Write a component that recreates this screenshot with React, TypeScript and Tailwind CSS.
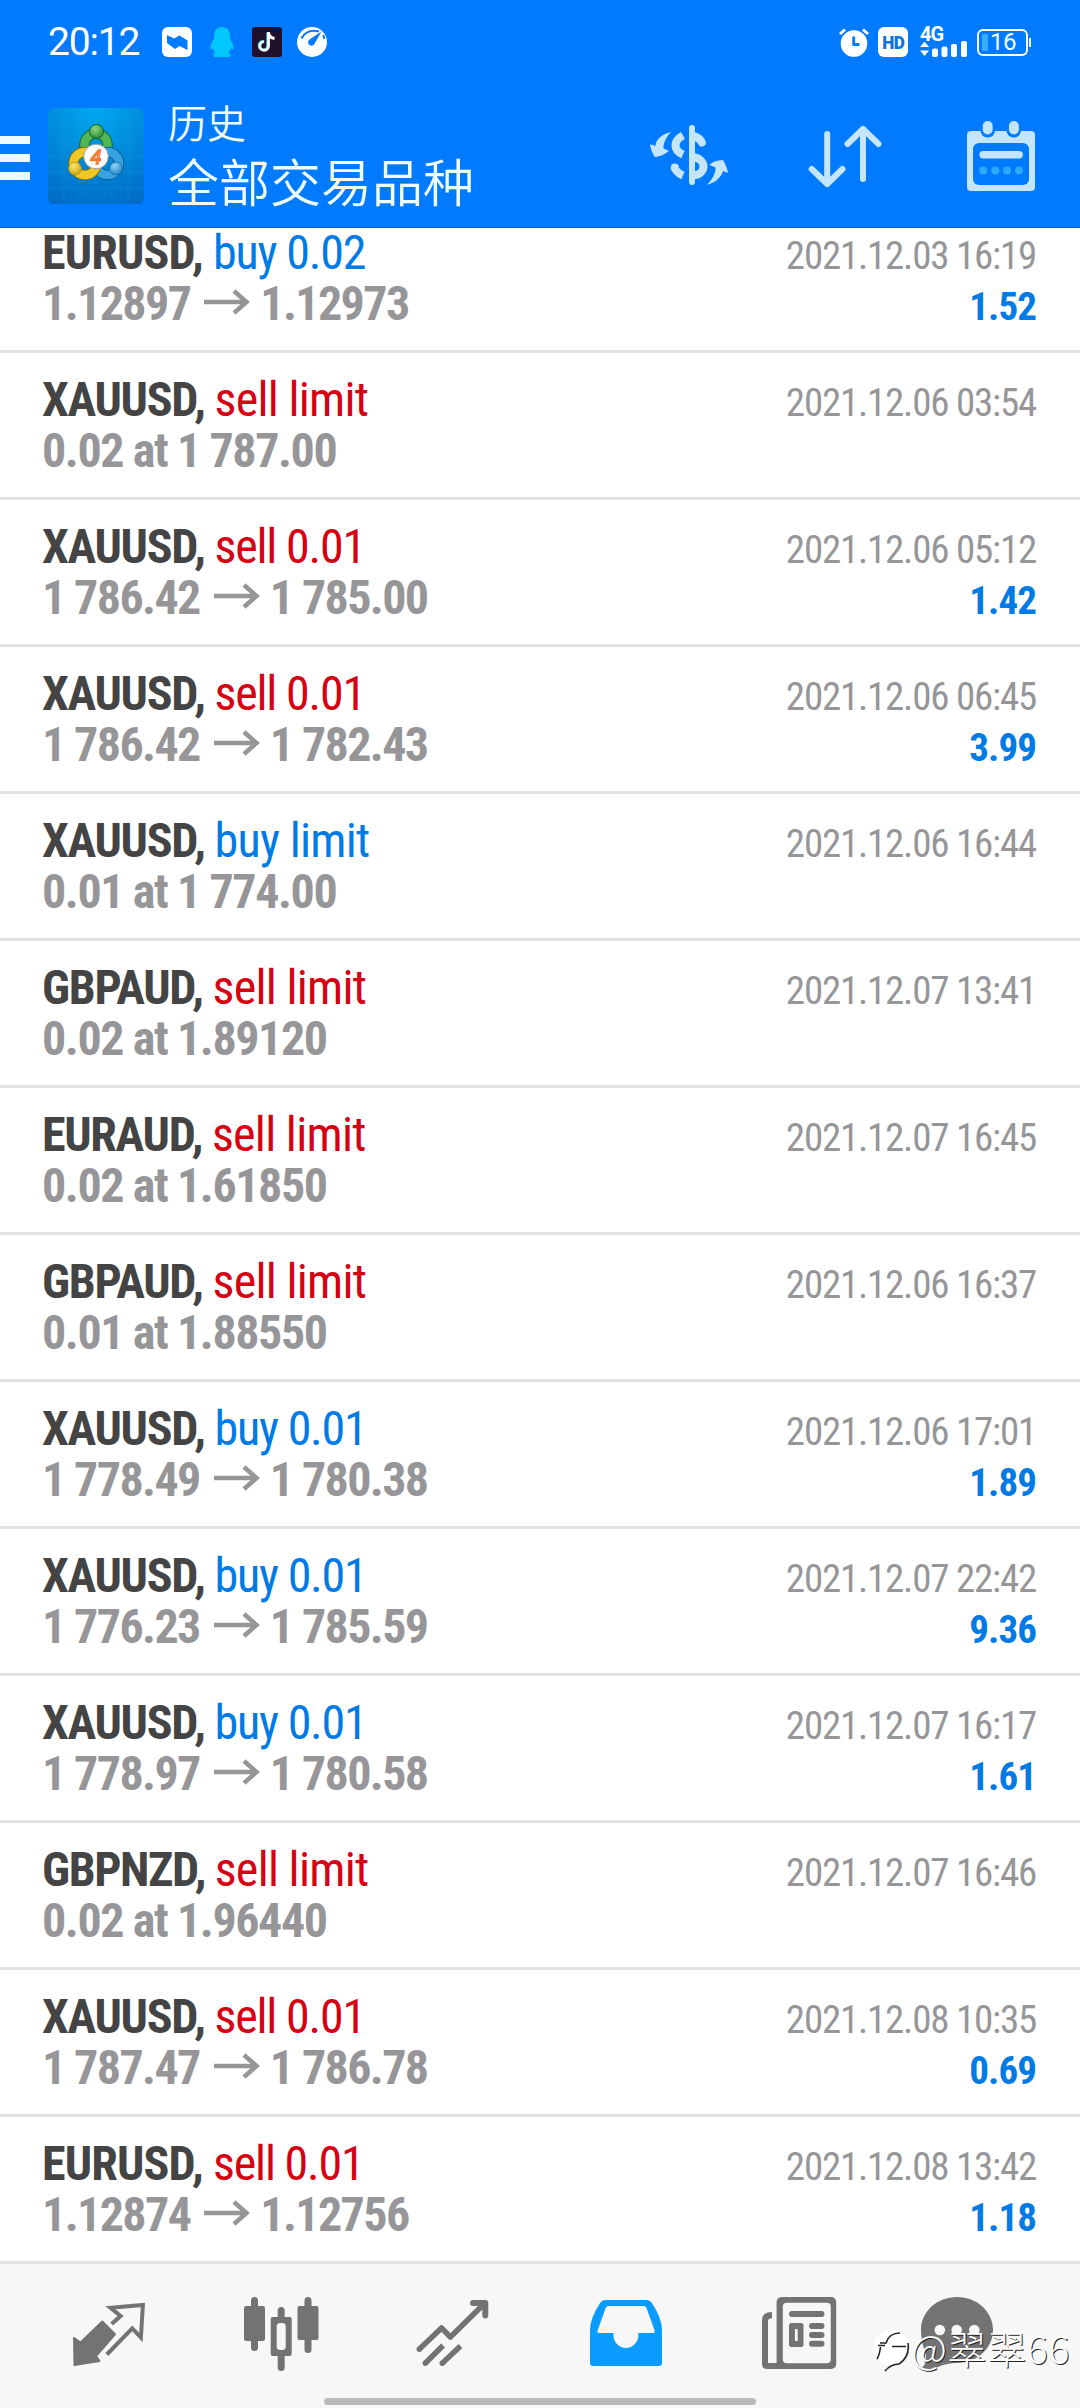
import React from "react";

type Side = "buy" | "sell";

interface Deal {
  symbol: string;
  side: Side;
  volume: string;
  from: string;
  to?: string;
  time: string;
  profit?: string;
}

const deals: Deal[] = [
  { symbol: "EURUSD", side: "buy", volume: "0.02", from: "1.12897", to: "1.12973", time: "2021.12.03 16:19", profit: "1.52" },
  { symbol: "XAUUSD", side: "sell", volume: "limit", from: "0.02 at 1 787.00", time: "2021.12.06 03:54" },
  { symbol: "XAUUSD", side: "sell", volume: "0.01", from: "1 786.42", to: "1 785.00", time: "2021.12.06 05:12", profit: "1.42" },
  { symbol: "XAUUSD", side: "sell", volume: "0.01", from: "1 786.42", to: "1 782.43", time: "2021.12.06 06:45", profit: "3.99" },
  { symbol: "XAUUSD", side: "buy", volume: "limit", from: "0.01 at 1 774.00", time: "2021.12.06 16:44" },
  { symbol: "GBPAUD", side: "sell", volume: "limit", from: "0.02 at 1.89120", time: "2021.12.07 13:41" },
  { symbol: "EURAUD", side: "sell", volume: "limit", from: "0.02 at 1.61850", time: "2021.12.07 16:45" },
  { symbol: "GBPAUD", side: "sell", volume: "limit", from: "0.01 at 1.88550", time: "2021.12.06 16:37" },
  { symbol: "XAUUSD", side: "buy", volume: "0.01", from: "1 778.49", to: "1 780.38", time: "2021.12.06 17:01", profit: "1.89" },
  { symbol: "XAUUSD", side: "buy", volume: "0.01", from: "1 776.23", to: "1 785.59", time: "2021.12.07 22:42", profit: "9.36" },
  { symbol: "XAUUSD", side: "buy", volume: "0.01", from: "1 778.97", to: "1 780.58", time: "2021.12.07 16:17", profit: "1.61" },
  { symbol: "GBPNZD", side: "sell", volume: "limit", from: "0.02 at 1.96440", time: "2021.12.07 16:46" },
  { symbol: "XAUUSD", side: "sell", volume: "0.01", from: "1 787.47", to: "1 786.78", time: "2021.12.08 10:35", profit: "0.69" },
  { symbol: "EURUSD", side: "sell", volume: "0.01", from: "1.12874", to: "1.12756", time: "2021.12.08 13:42", profit: "1.18" },
];

const StatusBar: React.FC = () => (
  <div className="flex h-[84px] items-center justify-between pl-[48px] pr-[49px] text-white">
    <div className="flex items-center">
      <span className="w-[114px] text-[39px] leading-none tracking-[-1.2px]">20:12</span>
      <svg className="h-[30px] w-[30px]" viewBox="0 0 30 30">
        <rect width="30" height="30" rx="6" fill="#fff" />
        <path d="M5 8 L12 11.5 L17.5 8.500 L25.5 13.5 V23 L17.5 19 L13 22 L5 16Z" fill="#007aff" />
      </svg>
      <svg className="ml-[18px] h-[30px] w-[24px]" viewBox="0 0 24 30">
        <path d="M12 0C6.500 0 4 4 4 9v3c-2 3-4 7-3.500 10 .5 1.500 2 0 2.500-1 .5 2 1.500 3.500 2.500 4.500-2 .5-3 4.500-.5 4.500h14c2.500 0 1.500-4-.5-4.500 1-1 2-2.500 2.500-4.500.5 1 2 2.500 2.500 1 .5-3-1.500-7-3.500-10V9c0-5-2.500-9-8-9Z" fill="#00c8ff" />
      </svg>
      <svg className="ml-[18px] h-[30px] w-[30px]" viewBox="0 0 30 30">
        <rect width="30" height="30" rx="3" fill="#20102c" />
        <path d="M16.500 6v13a4.300 4.300 0 1 1-4.300-4.300" fill="none" stroke="#25e0e8" strokeWidth="2.800" transform="translate(-.8 -.5)" />
        <path d="M16.500 6c.5 3.500 2.500 5 6 5.500" fill="none" stroke="#fff" strokeWidth="3" />
        <path d="M16.500 5v14a4.300 4.300 0 1 1-4.300-4.300" fill="none" stroke="#fff" strokeWidth="2.800" />
      </svg>
      <svg className="ml-[15px] h-[30px] w-[30px]" viewBox="0 0 30 30">
        <circle cx="15" cy="15" r="15" fill="#fff" />
        <path d="M4.500 11.500C8 4.500 15 2.500 22 4.500M26 8c1 1.500 1.200 3 1.400 4" fill="none" stroke="#007aff" strokeWidth="2" />
        <path d="M24.500 4.500L12.500 12.500a3.400 3.400 0 1 0 5 4.300Z" fill="#007aff" />
      </svg>
    </div>
    <div className="flex items-center">
      <svg className="h-[30px] w-[30px]" viewBox="0 0 30 30">
        <circle cx="15" cy="16.500" r="13.300" fill="#fff" />
        <path d="M1 7L6 2.500M24 2.500L29 7" stroke="#fff" strokeWidth="3" />
        <path d="M14.700 9.500V17.500H20.500" fill="none" stroke="#007aff" strokeWidth="2.800" />
      </svg>
      <span className="ml-[9px] flex h-[30px] w-[30px] items-center justify-center rounded-[6px] bg-white text-[19px] font-black leading-none tracking-[-0.5px] text-[#0a74d8]">
        <span className="scale-x-[.9]">HD</span>
      </span>
      <div className="ml-[12px] flex h-[30px] w-[48px] flex-col justify-between">
        <span className="text-[20px] font-bold leading-[14px] tracking-[-1px]">4G</span>
        <svg className="-mt-[1px] h-[16px] w-[48px] shrink-0" viewBox="0 0 48 16" fill="#fff">
          <path d="M4.500 0.500L9 6H0ZM4.500 15L0 9.500H9Z" />
          <rect x="12" y="7.500" width="6" height="8.500" rx="2" />
          <rect x="21.500" y="5.500" width="6" height="10.500" rx="2" />
          <rect x="31" y="3" width="6" height="13" rx="2" />
          <rect x="41" y="0" width="6" height="16" rx="2" />
        </svg>
      </div>
      <div className="ml-[9px] flex h-[27px] w-[51px] items-center rounded-[6px] border-2 border-white">
        <span className="ml-[3px] h-[17px] w-[6px] rounded-[1px] bg-[#37adff]" />
        <span className="ml-[2px] text-[24px] leading-none tracking-[-0.5px]">16</span>
      </div>
      <span className="ml-[1px] h-[9px] w-[2px] bg-white" />
    </div>
  </div>
);

const AppLogo: React.FC = () => (
  <svg className="h-[96px] w-[96px] rounded-[6px]" viewBox="0 0 96 96">
    <defs>
      <radialGradient id="tile" cx=".5" cy="0" r="1.100">
        <stop offset="0" stopColor="#00a8f0" />
        <stop offset=".55" stopColor="#0086d6" />
        <stop offset="1" stopColor="#0069c4" />
      </radialGradient>
      <radialGradient id="green" cx=".4" cy=".3" r=".8">
        <stop offset="0" stopColor="#8fd67c" />
        <stop offset="1" stopColor="#1c8230" />
      </radialGradient>
      <radialGradient id="yellow" cx=".4" cy=".3" r=".8">
        <stop offset="0" stopColor="#fbe96a" />
        <stop offset="1" stopColor="#c99a08" />
      </radialGradient>
      <radialGradient id="blue" cx=".4" cy=".3" r=".8">
        <stop offset="0" stopColor="#8fd3f7" />
        <stop offset="1" stopColor="#1278c0" />
      </radialGradient>
    </defs>
    <rect width="96" height="96" fill="url(#tile)" />
    <path d="M16 0V96M32 0V96M48 0V96M64 0V96M80 0V96M0 16H96M0 32H96M0 48H96M0 64H96M0 80H96" stroke="#20b4ff" strokeOpacity=".18" />
    <circle cx="48" cy="37" r="11.500" fill="none" stroke="#14632a" strokeWidth="10.500" />
    <circle cx="48" cy="37" r="11.500" fill="none" stroke="#4fb653" strokeWidth="8.500" />
    <circle cx="59.500" cy="55.500" r="11.500" fill="none" stroke="#0b5d99" strokeWidth="10.500" />
    <circle cx="59.500" cy="55.500" r="11.500" fill="none" stroke="#36a3e0" strokeWidth="8.500" />
    <circle cx="37" cy="55.500" r="11.500" fill="none" stroke="#8a6d08" strokeWidth="10.500" />
    <circle cx="37" cy="55.500" r="11.500" fill="none" stroke="#eec926" strokeWidth="8.500" />
    <circle cx="48.500" cy="23.500" r="7" fill="url(#green)" stroke="#14632a" />
    <circle cx="27" cy="60.500" r="6.500" fill="url(#yellow)" stroke="#a17f0a" strokeWidth=".6" />
    <circle cx="68" cy="60.500" r="6.500" fill="url(#blue)" stroke="#0b5d99" strokeWidth=".6" />
    <circle cx="48" cy="48.500" r="12.300" fill="#fff" stroke="#9aa3a0" />
    <text x="48" y="55.500" textAnchor="middle" fontSize="20" fontStyle="italic" fill="#fff" stroke="#ef7d32" strokeWidth="1.400">4</text>
  </svg>
);

const Header: React.FC = () => (
  <header className="relative z-10 h-[228px] bg-[#007aff] shadow-[inset_0_-1px_0_#0a63c8]">
    <StatusBar />
    <div className="flex h-[144px] items-center">
      <div className="flex w-[30px] flex-col gap-[10px] pt-[4px]">
        <span className="h-[8px] bg-[#eafaff]" />
        <span className="h-[8px] bg-[#eafaff]" />
        <span className="h-[8px] bg-[#eafaff]" />
      </div>
      <div className="ml-[18px]">
        <AppLogo />
      </div>
      <div className="ml-[24px] flex flex-col pb-[7px] font-['Noto_Sans_CJK_SC',sans-serif] font-[350] text-[#f0fdff]">
        <span className="text-[39px] leading-[54px]">历史</span>
        <span className="text-[51px] leading-[64px]">全部交易品种</span>
      </div>
      <div className="ml-auto flex items-start pr-[43px] text-[#c4e5fb]">
        <svg className="h-[74px] w-[84px]" viewBox="0 -2 84 74" fill="none" stroke="currentColor">
          <path d="M45 7V61" strokeWidth="6" strokeLinecap="round" />
          <path d="M36 14.500C26 20 26 29 36 33.500M27.500 46C28.500 50 31.500 52.500 36 54.500" strokeWidth="8" />
          <circle cx="27.800" cy="46.500" r="4" fill="currentColor" stroke="none" />
          <path d="M46 15C50 16 53.500 18.500 54.800 21.500M46 36C60 38 60 53 46 54.500" strokeWidth="8" strokeLinecap="round" />
          <path d="M24 11C14 13 8 20 8.500 25L3 23.300C4 30 7 35 8 36C13 35.500 19 33 21.800 29.700L16.500 27.500C16 22 20 15 24 11Z" fill="currentColor" stroke="none" />
          <path d="M60 63.700C69 62 75 55 76 50L81 52C80 46 77 40 75.500 39C70 39.500 65 41 62.500 44L68.500 46.500C69 52 65 59 60 63.700Z" fill="currentColor" stroke="none" />
        </svg>
        <svg className="ml-[75px] h-[74px] w-[78px]" viewBox="0 -2 78 74" fill="none" stroke="currentColor" strokeWidth="6" strokeLinecap="round" strokeLinejoin="round">
          <path d="M21.200 13V63M5.700 48L21.200 63L36.500 48" />
          <path d="M57 58V8M41.500 23L57 8L72.500 23" />
        </svg>
        <svg className="ml-[81px] h-[74px] w-[72px]" viewBox="0 0 72 74">
          <rect x="2" y="12" width="68" height="60" rx="4" fill="currentColor" />
          <rect x="8" y="24" width="56" height="42" rx="6" fill="#007aff" />
          <rect x="15.500" y="-2" width="14.500" height="20.500" rx="7" fill="#007aff" />
          <rect x="41.500" y="-2" width="14.500" height="20.500" rx="7" fill="#007aff" />
          <rect x="17.700" y="2" width="10" height="13.500" rx="5" fill="currentColor" />
          <rect x="43.900" y="2" width="10" height="13.500" rx="5" fill="currentColor" />
          <rect x="14.400" y="32" width="43.500" height="7.500" rx="3.700" fill="currentColor" />
          <g fill="#2fa8ff">
            <circle cx="18.200" cy="51.500" r="4" />
            <circle cx="30.300" cy="51.500" r="4" />
            <circle cx="42" cy="51.500" r="4" />
            <circle cx="54" cy="51.500" r="4" />
          </g>
        </svg>
      </div>
    </div>
  </header>
);

const symbolSpacing: Record<string, string> = {
  EURUSD: "tracking-[-0.85px]",
  GBPNZD: "tracking-[-1.45px]",
};

const DealRow: React.FC<{ deal: Deal }> = ({ deal }) => {
  const volumeSpacing = deal.volume === "limit" ? "tracking-[-0.7px]" : "tracking-[-1.2px]";
  const sideColor = deal.side === "buy" ? "text-[#007be6]" : "text-[#d60012]";

  return (
    <div className="h-[147px] shrink-0 border-b-[3px] border-[#e2e2e2] pl-[42px] pr-[44px] pt-[21px] text-[48px] leading-[51px] [font-stretch:75%]">
      <div className="flex h-[51px] items-baseline justify-between">
        <div className="whitespace-pre">
          <span className={`font-bold text-[#444444] ${symbolSpacing[deal.symbol] ?? "tracking-[-1.3px]"}`}>
            {deal.symbol},{" "}
          </span>
          <span className={`${sideColor} ${volumeSpacing}`}>
            {deal.side} {deal.volume}
          </span>
        </div>
        <span className="text-[39px] leading-none tracking-[-1.22px] text-[#969698]">{deal.time}</span>
      </div>
      <div className="flex h-[51px] items-baseline justify-between font-bold">
        {deal.to ? (
          <div className="flex items-baseline tracking-[-1.6px] text-[#969698]">
            <span>{deal.from}</span>
            <svg className="mb-[4px] ml-[14px] mr-[10px] h-[26px] w-[46px] self-center" viewBox="0 0 46 26" fill="none" stroke="currentColor" strokeWidth="4.500">
              <path d="M0 13H43M30 2L42.500 13L30 24" />
            </svg>
            <span>{deal.to}</span>
          </div>
        ) : (
          <span className="tracking-[-1.4px] text-[#969698]">{deal.from}</span>
        )}
        {deal.profit && (
          <span className="text-[39px] leading-none tracking-[-0.9px] text-[#007be6]">{deal.profit}</span>
        )}
      </div>
    </div>
  );
};

const TabBar: React.FC = () => (
  <nav className="flex h-[144px] flex-col bg-[#f7f7f7] text-[#737373]">
    <div className="ml-[23px] flex pt-[32px]">
      <div className="flex w-[172.5px] justify-center">
        <svg className="h-[78px] w-[78px]" viewBox="0 0 78 78">
          <path d="M4 42L10.600 46.500L32.300 25.500L45 38.300L26 60L29.500 65L4.500 69Z" fill="currentColor" stroke="currentColor" strokeWidth="2" strokeLinejoin="round" />
          <path d="M41.600 28L50.600 20L40.500 11.800L72.900 9L70.900 41.500L62.300 32.300L36.800 58.500" fill="none" stroke="currentColor" strokeWidth="4" />
        </svg>
      </div>
      <div className="flex w-[172.5px] justify-center">
        <svg className="h-[78px] w-[78px]" viewBox="0 0 78 78" fill="currentColor">
          <rect x="1" y="10" width="21" height="35" rx="2" />
          <rect x="8" y="1" width="7" height="54" rx="3.500" />
          <rect x="34.700" y="11" width="7" height="64" rx="3.500" />
          <rect x="27.700" y="21" width="21" height="39" rx="2" />
          <rect x="33.700" y="27" width="9" height="27" rx="3.500" fill="#f7f7f7" />
          <rect x="54.500" y="10" width="21" height="34" rx="2" />
          <rect x="61.500" y="1" width="7" height="56" rx="3.500" />
        </svg>
      </div>
      <div className="flex w-[172.5px] justify-center">
        <svg className="h-[78px] w-[78px]" viewBox="0 0 78 78" fill="none" stroke="currentColor" strokeWidth="5.500">
          <path d="M4 53.500L26.500 32L35.400 41L69 8" strokeLinejoin="round" />
          <path d="M58 7H70.300V19.500" strokeWidth="6" strokeLinecap="round" strokeLinejoin="round" />
          <path d="M10 67.500L28 49.500M27 67.500L45.500 50" />
          <g fill="currentColor" stroke="none">
            <circle cx="4.300" cy="53.300" r="2.700" />
            <circle cx="10.300" cy="67.300" r="2.700" />
            <circle cx="27.200" cy="67.300" r="2.700" />
          </g>
        </svg>
      </div>
      <div className="flex w-[172.5px] justify-center">
        <svg className="h-[78px] w-[78px]" viewBox="0 0 78 78">
          <path d="M17 4H59Q62 4 63.500 6.500Q74 22 74 34V67Q74 70 71 70H5Q2 70 2 67V34Q2 22 12.500 6.500Q14 4 17 4Z" fill="#0a9bff" />
          <path d="M20 10H56Q57.500 10 58.500 12L66.800 35Q67 37 65 37H50.300V39.600A12.400 12.400 0 0 1 25.500 39.600V37H11Q9 37 9.400 35L17.700 12Q18.500 10 20 10Z" fill="#f7f7f7" />
        </svg>
      </div>
      <div className="flex w-[172.5px] justify-center">
        <svg className="h-[78px] w-[78px]" viewBox="0 0 78 78" fill="currentColor">
          <path d="M12 16Q2 16 2 24V68Q2 73 7 73H24V67H8V25Q8 22.300 12 22.300Z" />
          <rect x="16.600" y="1" width="59.600" height="72" rx="5" />
          <rect x="22.800" y="6.700" width="48" height="60.600" rx="4" fill="#f7f7f7" />
          <rect x="29" y="15" width="35.500" height="6" rx="3" />
          <rect x="29" y="27" width="14.500" height="24" rx="2.500" />
          <rect x="34.900" y="33" width="2.800" height="12" fill="#f7f7f7" />
          <rect x="49" y="27" width="15.500" height="6" rx="3" />
          <rect x="49" y="36" width="15.500" height="6" rx="3" />
          <rect x="49" y="44.700" width="15.500" height="6" rx="3" />
        </svg>
      </div>
      <div className="flex w-[143px] justify-center">
        <svg className="h-[78px] w-[78px]" viewBox="0 0 78 78">
          <path d="M39 1C59 1 75 15.500 75 34S59 67 39 67C32 67 27 68 20 71Q10 75 3 72.700Q9 68 8 58Q3 47 3 34C3 15.500 19 1 39 1Z" fill="currentColor" />
          <g fill="#f7f7f7">
            <circle cx="21.800" cy="34" r="5.300" />
            <circle cx="38.700" cy="34" r="5.300" />
            <circle cx="56.300" cy="34" r="5.300" />
          </g>
        </svg>
      </div>
    </div>
    <div className="mx-auto mt-[24px] h-[7px] w-[432px] rounded-full bg-[#bababa]" />
  </nav>
);

const AuthorMark: React.FC = () => (
  <div className="absolute bottom-[35px] right-[10px] z-20 flex items-center text-white">
    <svg className="h-[44px] w-[38px]" viewBox="0 0 38 44">
      <circle cx="19" cy="19" r="18" fill="#fff" />
      <path d="M6 16.500H13M20 17.500H34M5 30Q7.500 26 8.500 18M28 4Q17 4 14 14H8M36 14Q38 28 27 35Q19 35 13 42" fill="none" stroke="#222" strokeWidth="1.600" />
    </svg>
    <span className="-mt-[8px] ml-[1px] font-['Noto_Sans_CJK_SC',sans-serif] text-[39px] font-light leading-[44px] tracking-[0.7px] [text-shadow:1px_1px_0_#222]">@翠翠66</span>
  </div>
);

export default function App() {
  return (
    <div className="relative flex h-[2408px] w-[1080px] flex-col overflow-hidden bg-white font-[Roboto,sans-serif]">
      <Header />
      {/* list is scrolled a little, so the first row slides under the header */}
      <main className="-mt-[22px] flex flex-col">
        {deals.map((deal) => (
          <DealRow key={deal.time} deal={deal} />
        ))}
      </main>
      <TabBar />
      <AuthorMark />
    </div>
  );
}
